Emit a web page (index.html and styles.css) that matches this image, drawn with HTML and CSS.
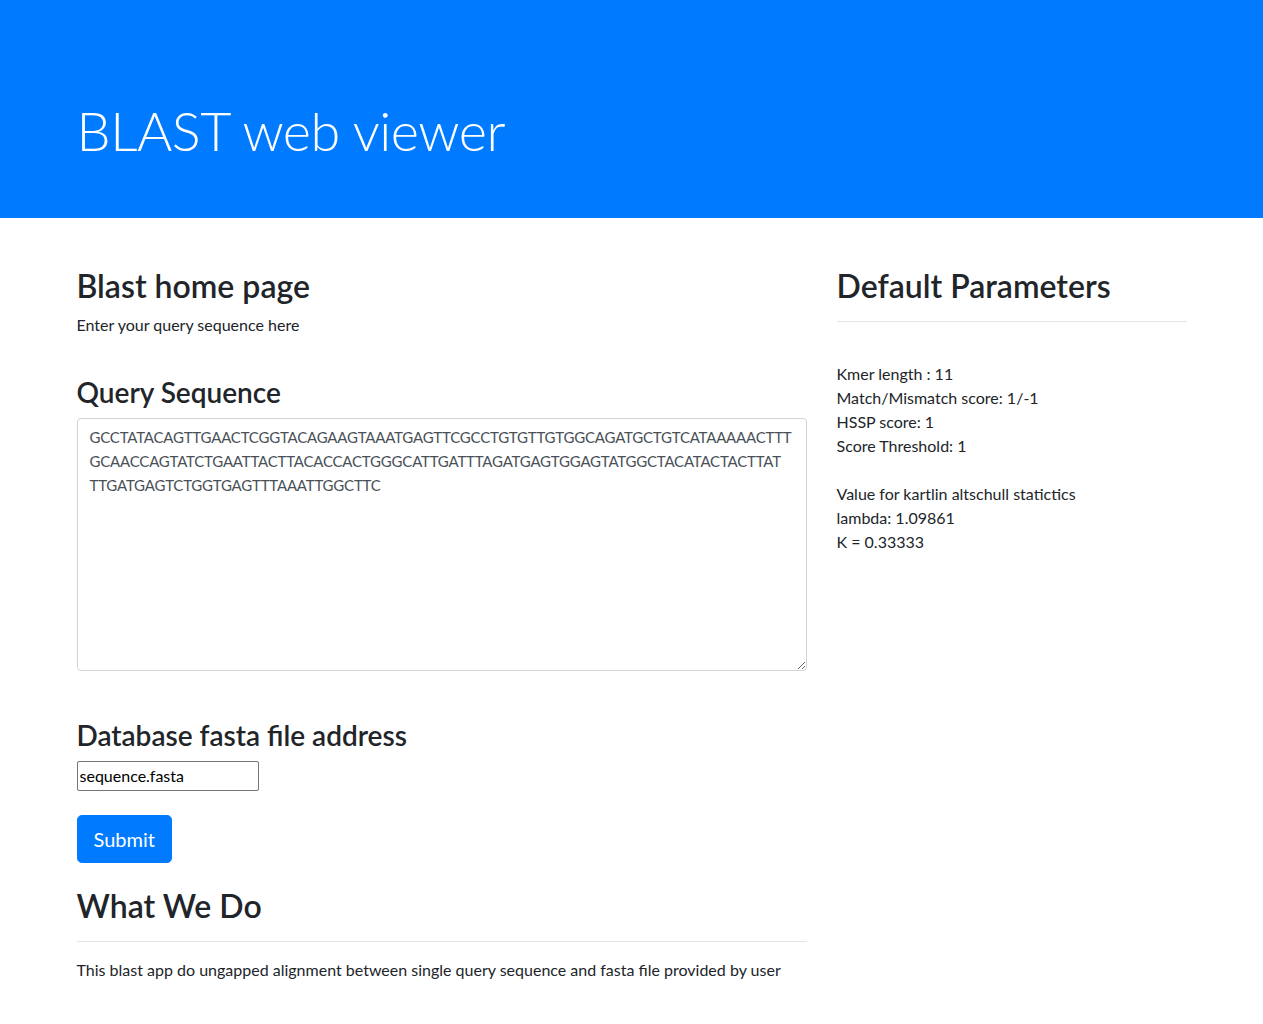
FILE: index.html
```html
<!DOCTYPE html>
<html lang="en">
<head>
<meta charset="utf-8">
<title>BLAST web viewer</title>
<link rel="stylesheet" href="styles.css">
</head>
<body>
<div class="jumbotron">
  <div class="container">
    <h1 class="display">BLAST web viewer</h1>
  </div>
</div>
<div class="container main">
  <div class="row">
    <div class="col-left">
      <h2 class="heading">Blast home page</h2>
      <p class="lead-text">Enter your query sequence here</p>
      <form class="query-form">
        <h3 class="subheading subheading-query">Query Sequence</h3>
        <textarea class="form-control" rows="10">GCCTATACAGTTGAACTCGGTACAGAAGTAAATGAGTTCGCCTGTGTTGTGGCAGATGCTGTCATAAAAACTTT
GCAACCAGTATCTGAATTACTTACACCACTGGGCATTGATTTAGATGAGTGGAGTATGGCTACATACTACTTAT
TTGATGAGTCTGGTGAGTTTAAATTGGCTTC</textarea>
        <h3 class="subheading subheading-db">Database fasta file address</h3>
        <input class="db-input" type="text" value="sequence.fasta">
        <button class="btn-submit" type="button">Submit</button>
      </form>
      <h2 class="heading heading-what">What We Do</h2>
      <hr class="rule">
      <p class="about">This blast app do ungapped alignment between single query sequence and fasta file provided by user</p>
    </div>
    <div class="col-right">
      <h2 class="heading">Default Parameters</h2>
      <hr class="rule">
      <div class="params">
        <div class="param">Kmer length : 11</div>
        <div class="param">Match/Mismatch score: 1/-1</div>
        <div class="param">HSSP score: 1</div>
        <div class="param">Score Threshold: 1</div>
        <div class="param blank"></div>
        <div class="param">Value for kartlin altschull statictics</div>
        <div class="param">lambda: 1.09861</div>
        <div class="param">K = 0.33333</div>
      </div>
    </div>
  </div>
</div>
</body>
</html>
```

FILE: styles.css
```css
* { box-sizing: border-box; }

body {
  margin: 0;
  font-family: Lato, "Open Sans", Arial, sans-serif;
  font-size: 16px;
  line-height: 24px;
  color: #212529;
  background: #fff;
}

.container {
  width: 1140px;
  margin: 0 auto;
  padding: 0 15px;
}

.jumbotron {
  background: #007bff;
  color: #fff;
  padding: 97px 0 54px;
}

.display {
  margin: 0;
  font-size: 54px;
  font-weight: 300;
  line-height: 67px;
  letter-spacing: -0.5px;
}

.main {
  padding-top: 49px;
}

.row {
  display: flex;
  margin: 0 -15px;
}

.col-left,
.col-right,
.query-form {
  display: flex;
  flex-direction: column;
  align-items: flex-start;
}

.col-left {
  width: 760px;
  padding: 0 15px;
}

.col-right {
  width: 380px;
  padding: 0 15px;
}

.query-form { width: 100%; }

.heading {
  margin: 0 0 8px;
  font-size: 32px;
  font-weight: 600;
  line-height: 38.4px;
}

.subheading {
  margin: 0 0 8px;
  font-size: 28px;
  font-weight: 600;
  line-height: 33.6px;
}

.lead-text {
  margin: 0 0 16px;
}

.subheading-query { margin-top: 23px; }

.form-control {
  display: block;
  width: 100%;
  height: 253px;
  padding: 6px 12px;
  font-family: inherit;
  font-size: 15px;
  line-height: 24px;
  letter-spacing: -0.2px;
  color: #495057;
  background: #fff;
  border: 1px solid #ced4da;
  border-radius: 4px;
  resize: vertical;
  overflow: auto;
  margin: 0;
}

.subheading-db { margin-top: 48px; }

.db-input {
  display: block;
  width: 182px;
  height: 30px;
  margin: 0;
  padding: 1px 2px;
  font-family: inherit;
  font-size: 16px;
  line-height: 24px;
  color: #000;
  border: 1px solid #767676;
  border-radius: 2px;
}

.btn-submit {
  display: block;
  margin: 24px 0 0;
  padding: 8px 16px;
  font-family: inherit;
  font-size: 20px;
  line-height: 30px;
  color: #fff;
  background: #007bff;
  border: 1px solid #007bff;
  border-radius: 4.8px;
}

.heading-what { margin-top: 24px; }

.rule {
  align-self: stretch;
  margin: 8px 0 16px;
  border: 0;
  border-top: 1px solid rgba(0, 0, 0, 0.1);
  height: 0;
}

.about { margin: 0; }

.params {
  padding-top: 24px;
}

.param { height: 24px; }
```
